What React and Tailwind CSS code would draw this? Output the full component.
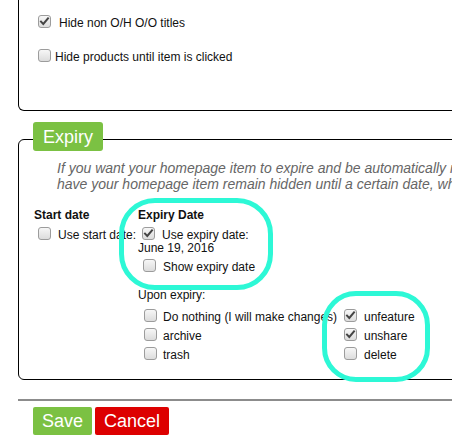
import React from "react";

function Box({ checked }) {
  return (
    <span className="relative block w-[13px] h-[13px] shrink-0 rounded-[3px] border border-[#9c9c9c] bg-linear-to-b from-[#f7f7f7] to-[#dcdcdc]">
      {checked && (
        <svg viewBox="0 0 13 13" className="absolute left-[-1px] top-[-1px] w-[13px] h-[13px]">
          <path d="M3 6.6 L5.3 9 L10 3.4" fill="none" stroke="#444" strokeWidth="2" strokeLinecap="square" />
        </svg>
      )}
    </span>
  );
}

function Row({ checked, label, gap = "ml-[7px]", cls = "" }) {
  return (
    <div className={`flex items-start ${cls}`}>
      <Box checked={checked} />
      <span className={`mt-[1px] leading-[15px] whitespace-nowrap ${gap}`}>{label}</span>
    </div>
  );
}

export default function App() {
  return (
    <div className="relative w-[452px] h-[444px] overflow-hidden bg-white text-[12px] text-[#111] font-['Liberation_Sans',Arial,sans-serif]">
      {/* top panel */}
      <div className="ml-[18px] w-[480px] h-[111px] border-l border-r border-b border-black rounded-bl-[6px] pt-[15px] pl-[19px]">
        <Row checked label="Hide non O/H O/O titles" gap="ml-[8px]" />
        <Row label="Hide products until item is clicked" gap="ml-[4px]" cls="mt-[18px]" />
      </div>

      {/* expiry legend */}
      <div className="mt-[11px] ml-[33px] relative z-10 w-fit h-[29px] px-[10px] flex items-center rounded-[3px] bg-[#7bc143] text-white text-[18px] leading-[18px]">
        Expiry
      </div>
      <div className="-mt-[12px] ml-[18px] w-[480px] h-[241px] border border-black rounded-l-[6px]">
        <div className="mt-[20px] ml-[38px] text-[14px] leading-[16px] italic text-[#666] whitespace-nowrap">
          <div>If you want your homepage item to expire and be automatically removed from the homepage, or if you want to</div>
          <div>have your homepage item remain hidden until a certain date, which you can set here.</div>
        </div>
        <div className="mt-[16px] ml-[15px] flex">
          <div className="w-[104px]">
            <div className="font-bold leading-[15px]">Start date</div>
            <Row label="Use start date:" cls="mt-[4px] ml-[4px]" />
          </div>
          <div>
            <div className="font-bold leading-[15px]">Expiry Date</div>
            <Row checked label="Use expiry date:" cls="mt-[4px] ml-[4px] h-[14px]" />
            <div className="leading-[15px]">June 19, 2016</div>
            <Row label="Show expiry date" cls="mt-[3px] ml-[5px]" />
            <div className="mt-[13px] leading-[15px]">Upon expiry:</div>
            <div className="mt-[6px] flex">
              <div className="w-[200px] ml-[6px]">
                <Row label="Do nothing (I will make changes)" gap="ml-[6px]" cls="h-[19px]" />
                <Row label="archive" gap="ml-[6px]" cls="h-[19px]" />
                <Row label="trash" gap="ml-[6px]" cls="h-[19px]" />
              </div>
              <div>
                <Row checked label="unfeature" cls="h-[19px]" />
                <Row checked label="unshare" cls="h-[19px]" />
                <Row label="delete" cls="h-[19px]" />
              </div>
            </div>
          </div>
        </div>
      </div>

      {/* divider */}
      <div className="mt-[19px] ml-[18px] h-[2px] w-[440px] bg-[#8c8c8c]" />

      {/* buttons */}
      <div className="mt-[6px] ml-[33px] flex gap-[3px]">
        <button className="h-[28px] px-[9px] rounded-[2px] bg-[#7bc143] text-white text-[18px] leading-[18px]">Save</button>
        <button className="h-[28px] px-[9px] rounded-[2px] bg-[#dd0000] text-white text-[18px] leading-[18px]">Cancel</button>
      </div>

      {/* annotation rings */}
      <div className="absolute left-[119px] top-[198px] w-[154px] h-[92px] rounded-[36px] border-[5px] border-[#2df8d6] pointer-events-none" />
      <div className="absolute left-[322px] top-[291px] w-[108px] h-[91px] rounded-[34px] border-[5px] border-[#2df8d6] pointer-events-none" />
    </div>
  );
}
